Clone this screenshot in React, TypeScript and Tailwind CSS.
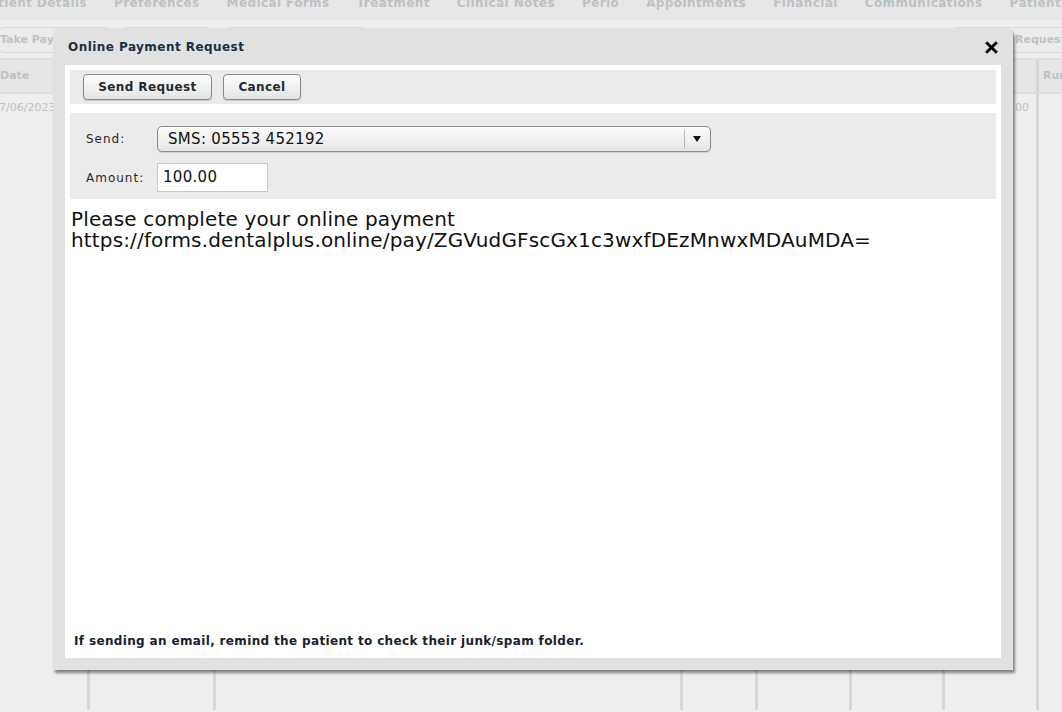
import React from 'react';

const tabs = ['tient Details', 'Preferences', 'Medical Forms', 'Treatment', 'Clinical Notes', 'Perio', 'Appointments', 'Financial', 'Communications', 'Patient'];

const cols = ['w-[87px]', 'w-[126px]', 'w-[467px]', 'w-[75px]', 'w-[94px]', 'w-[93px]', 'w-[94px]', 'flex-1'];

const font = { fontFamily: '"DejaVu Sans", "Liberation Sans", sans-serif' };

const Background: React.FC = () => (
  <div className="w-[1062px] h-[712px] bg-[#eeeeee] overflow-hidden text-[#bcc2c6]" style={font}>
    <div className="h-[20px] bg-[#e7e7e7] flex overflow-hidden border-b border-[#e2e2e2]">
      <div className="flex gap-[27px] -ml-[2px] -mt-[4px] text-[12px] font-bold tracking-[0.4px] whitespace-nowrap">
        {tabs.map(t => (
          <div key={t} className="shrink-0 leading-[14px]">{t}</div>
        ))}
      </div>
    </div>
    <div className="h-[36px] flex items-center pt-[4px]">
      <div className="w-[110px] h-[26px] -ml-[1px] border border-[#dadada] rounded-[4px] bg-[#ececec] text-[11px] font-bold leading-[24px] whitespace-nowrap overflow-hidden">Take Payment</div>
      <div className="w-[90px] h-[26px] ml-[13px] border border-[#dadada] rounded-[4px] bg-[#ececec]" />
      <div className="w-[138px] h-[26px] ml-[15px] border border-[#dadada] rounded-[4px] bg-[#ececec]" />
      <div className="flex-1" />
      <div className="w-[130px] h-[26px] -mr-[20px] border border-[#dadada] rounded-[4px] bg-[#ececec] text-[11px] font-bold leading-[24px] pl-[62px] whitespace-nowrap overflow-hidden">Request</div>
    </div>
    <div className="h-[36px] flex bg-[#e6e6e6] border-y-2 border-[#dedede] mt-[2px]">
      {cols.map((c, i) => (
        <div key={i} className={`${c} shrink-0 ${i > 0 ? 'border-l-[3px] border-[#d6d6d6]' : ''} text-[11px] font-bold leading-[32px] pl-[4px] whitespace-nowrap overflow-hidden`}>
          {i === 0 ? <span className="-ml-[4px]">Date</span> : i === 7 ? 'Run' : ''}
        </div>
      ))}
    </div>
    <div className="h-[616px] flex">
      {cols.map((c, i) => (
        <div key={i} className={`${c} shrink-0 ${i > 0 ? 'border-l-[3px] border-[#d6d6d6]' : ''} text-[11px] pt-[6px] whitespace-nowrap overflow-hidden`}>
          {i === 0 ? <span className="-ml-[8px]">27/06/2023</span> : i === 6 ? <span className="pl-[70px]">00</span> : ''}
        </div>
      ))}
    </div>
  </div>
);

const App: React.FC = () => {
  return (
    <div className="relative w-[1062px] h-[712px] overflow-hidden">
      <Background />
      <div
        className="absolute left-[53px] top-[28px] w-[960px] h-[642px] bg-[#e1e1e1] rounded-t-[7px] shadow-[2px_3px_3px_rgba(0,0,0,0.45)] flex flex-col"
        style={font}
      >
        <div className="h-[37px] flex items-center justify-between pl-[15px] pr-[15px]">
          <span className="text-[12px] font-bold text-[#1b2f42] tracking-[0.45px]">Online Payment Request</span>
          <svg width="13" height="13" viewBox="0 0 12 12" className="mt-[1px]">
            <path d="M2 2 L10 10 M10 2 L2 10" stroke="#000" strokeWidth="2.6" strokeLinecap="square" />
          </svg>
        </div>
        <div className="flex-1 mx-[12px] mb-[12px] bg-white p-[5px] flex flex-col">
          <div className="h-[34px] bg-[#ebebeb] flex items-center gap-[11px] pl-[13px]">
            <button className="h-[26px] w-[129px] rounded-[4px] border border-[#8a8a8a] bg-gradient-to-b from-[#fdfdfd] to-[#e4e4e4] text-[12px] font-bold tracking-[0.4px] text-[#1f2a33] shadow-[0_1px_1px_rgba(0,0,0,0.15)]">
              Send Request
            </button>
            <button className="h-[26px] w-[78px] rounded-[4px] border border-[#8a8a8a] bg-gradient-to-b from-[#fdfdfd] to-[#e4e4e4] text-[12px] font-bold tracking-[0.4px] text-[#1f2a33] shadow-[0_1px_1px_rgba(0,0,0,0.15)]">
              Cancel
            </button>
          </div>
          <div className="mt-[9px] h-[86px] bg-[#ebebeb] pl-[16px] pt-[13px] flex flex-col gap-[11px]">
            <div className="flex items-center">
              <span className="w-[71px] text-[12px] tracking-[1px] text-[#2a2a2a]">Send:</span>
              <div className="w-[554px] h-[26px] rounded-[5px] border border-[#8c8c8c] bg-gradient-to-b from-[#fcfcfc] to-[#e6e6e6] flex items-center shadow-[0_1px_1px_rgba(0,0,0,0.12)]">
                <span className="flex-1 pl-[10px] text-[15px] tracking-[0.3px] text-[#111]">SMS: 05553 452192</span>
                <span className="w-px h-[18px] bg-[#b5b5b5]" />
                <svg width="25" height="10" viewBox="0 0 25 10">
                  <path d="M8 2 L16 2 L12 8 Z" fill="#111" />
                </svg>
              </div>
            </div>
            <div className="flex items-center">
              <span className="w-[71px] text-[12px] tracking-[1px] text-[#2a2a2a]">Amount:</span>
              <div className="w-[111px] h-[29px] bg-white border border-[#c8c8c8] flex items-center pl-[5px] text-[15px] tracking-[0.3px] text-[#111]">
                100.00
              </div>
            </div>
          </div>
          <div className="mt-[10px] pl-[1px] text-[20px] leading-[21px] tracking-[0.15px] text-[#111]">
            <div>Please complete your online payment</div>
            <div>https://forms.dentalplus.online/pay/ZGVudGFscGx1c3wxfDEzMnwxMDAuMDA=</div>
          </div>
          <div className="flex-1" />
          <div className="pl-[4px] pb-[3px] text-[12px] font-bold tracking-[0.35px] text-[#15232e]">
            If sending an email, remind the patient to check their junk/spam folder.
          </div>
        </div>
      </div>
    </div>
  );
};

export default App;
